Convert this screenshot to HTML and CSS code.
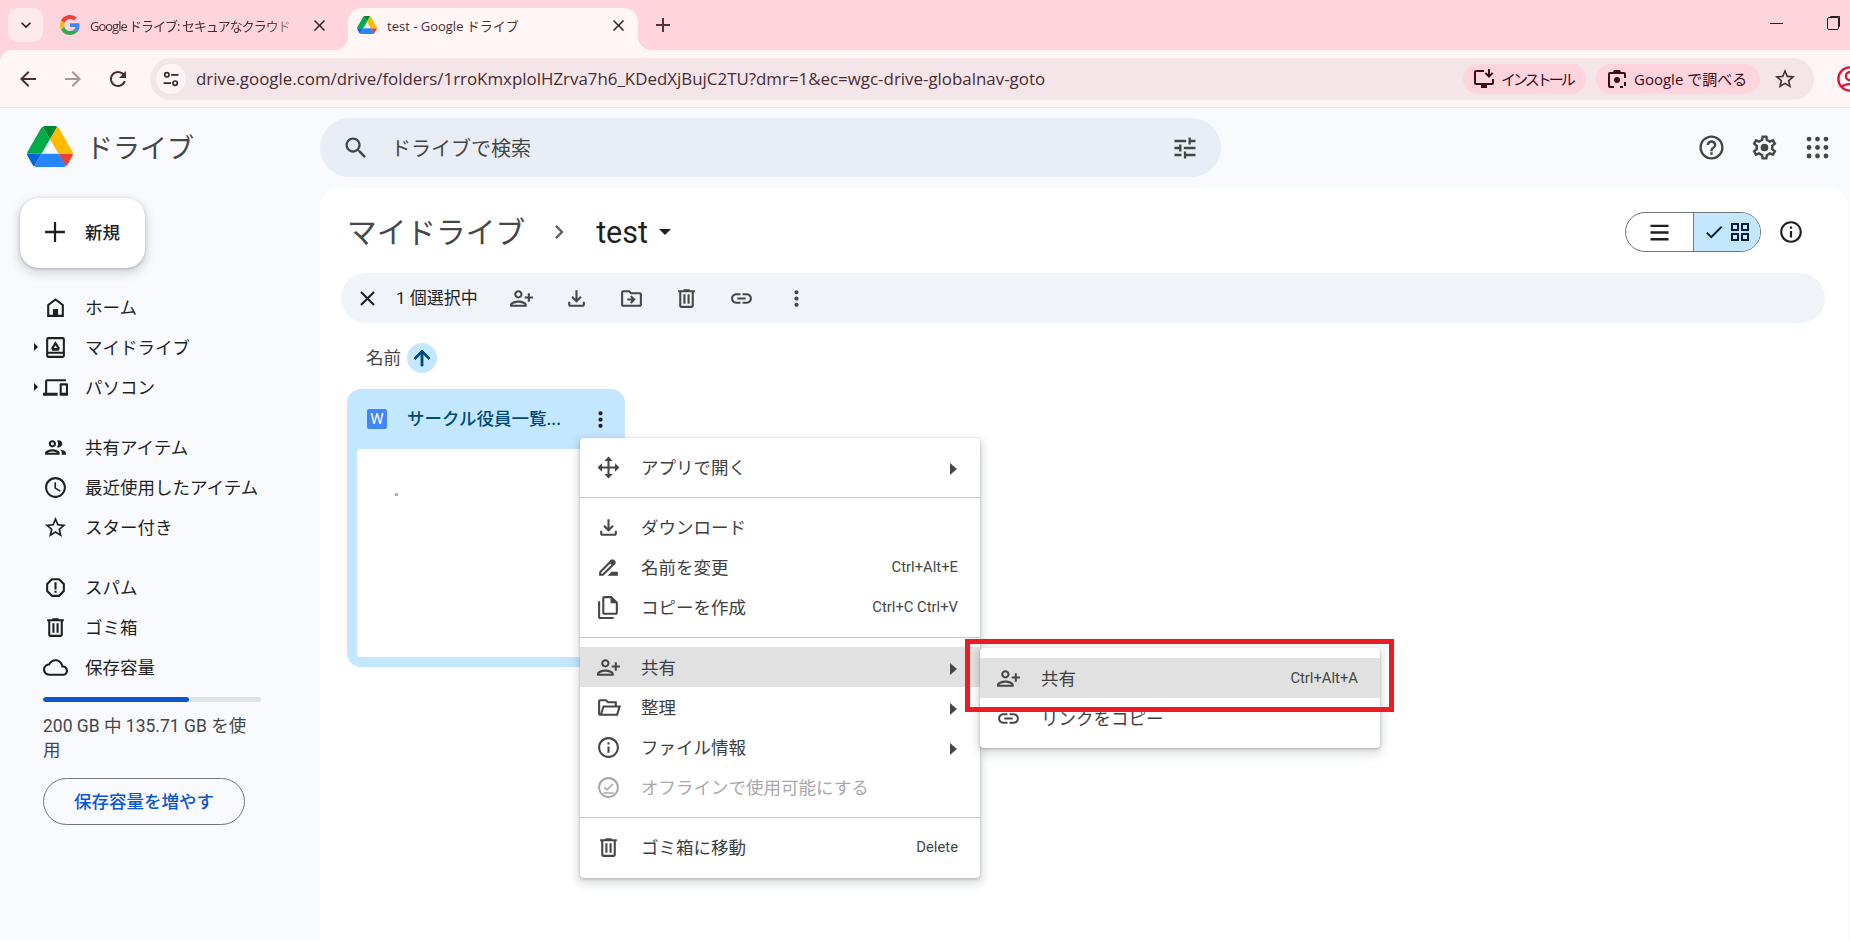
FILE: index.html
```html
<!DOCTYPE html>
<html lang="ja">
<head>
    <meta charset="UTF-8">
    <title>test - Google ドライブ</title>
    <link rel="stylesheet" href="styles.css">
</head>
<body>

    <!-- icon sprite -->
    <svg class="sprite" xmlns="http://www.w3.org/2000/svg">
        <symbol id="i-person-add" viewBox="0 0 24 24"><path transform="matrix(-1 0 0 1 24 0)" d="M15 12c2.21 0 4-1.79 4-4s-1.79-4-4-4-4 1.79-4 4 1.79 4 4 4zm0-6c1.1 0 2 .9 2 2s-.9 2-2 2-2-.9-2-2 .9-2 2-2zm0 8c-2.67 0-8 1.34-8 4v2h16v-2c0-2.66-5.33-4-8-4zm-6 4c.22-.72 3.31-2 6-2 2.7 0 5.8 1.29 6 2H9zm-3-3v-3h3v-2H6V7H4v3H1v2h3v3h2z"/></symbol>
        <symbol id="i-download" viewBox="0 0 24 24"><path d="M18 15v3H6v-3H4v3c0 1.1.9 2 2 2h12c1.1 0 2-.9 2-2v-3h-2zm-1-4-1.41-1.41L13 12.17V4h-2v8.17L8.41 9.59 7 11l5 5 5-5z"/></symbol>
        <symbol id="i-move" viewBox="0 0 24 24"><path d="M20 6h-8l-2-2H4c-1.1 0-1.99.9-1.99 2L2 18c0 1.1.9 2 2 2h16c1.1 0 2-.9 2-2V8c0-1.1-.9-2-2-2zm0 12H4V6h5.17l2 2H20v10zm-8.01-9-1.41 1.41L12.16 12H8v2h4.16l-1.59 1.59L11.99 17 16 13.01 11.99 9z"/></symbol>
        <symbol id="i-trash" viewBox="0 0 24 24"><path d="M15 4V3H9v1H4v2h1v13c0 1.1.9 2 2 2h10c1.1 0 2-.9 2-2V6h1V4h-5zm2 15H7V6h10v13zM9 8h2v9H9zm4 0h2v9h-2z"/></symbol>
        <symbol id="i-link" viewBox="0 0 24 24"><path d="M3.9 12c0-1.71 1.39-3.1 3.1-3.1h4V7H7c-2.76 0-5 2.24-5 5s2.24 5 5 5h4v-1.9H7c-1.71 0-3.1-1.39-3.1-3.1zM8 13h8v-2H8v2zm9-6h-4v1.9h4c1.71 0 3.1 1.39 3.1 3.1s-1.39 3.1-3.1 3.1h-4V17h4c2.76 0 5-2.24 5-5s-2.24-5-5-5z"/></symbol>
        <symbol id="i-more" viewBox="0 0 24 24"><path d="M12 8c1.1 0 2-.9 2-2s-.9-2-2-2-2 .9-2 2 .9 2 2 2zm0 2c-1.1 0-2 .9-2 2s.9 2 2 2 2-.9 2-2-.9-2-2-2zm0 6c-1.1 0-2 .9-2 2s.9 2 2 2 2-.9 2-2-.9-2-2-2z"/></symbol>
        <symbol id="i-close" viewBox="0 0 24 24"><path d="M19 6.41 17.59 5 12 10.59 6.41 5 5 6.41 10.59 12 5 17.59 6.41 19 12 13.41 17.59 19 19 17.59 13.41 12z"/></symbol>
        <symbol id="i-home" viewBox="0 0 24 24"><path d="M12 3 4 9v12h16V9l-8-6zm6 16H6v-9l6-4.5 6 4.5v9z"/><path d="M9.5 13.5h5V20h-5z"/></symbol>
        <symbol id="i-mydrive" viewBox="0 0 24 24"><path d="M19 2H5a2 2 0 0 0-2 2v16c0 1.1.9 2 2 2h14a2 2 0 0 0 2-2V4a2 2 0 0 0-2-2zm0 18H5v-2h14v2zm0-4H5V4h14v12z"/><path d="M12 6 7.8 12.5 9 15h6l1.2-2.5L12 6zm0 3.8 1.6 2.7h-3.2L12 9.8z"/></symbol>
        <symbol id="i-devices" viewBox="0 0 24 24"><path d="M4 6h18V4H4c-1.1 0-2 .9-2 2v11H0v3h14v-3H4V6zm19 2h-6c-.55 0-1 .45-1 1v10c0 .55.45 1 1 1h6c.55 0 1-.45 1-1V9c0-.55-.45-1-1-1zm-1 9h-4v-7h4v7z"/></symbol>
        <symbol id="i-people" viewBox="0 0 24 24"><path d="M9 13.75c-2.34 0-7 1.17-7 3.5V19h14v-1.75c0-2.33-4.66-3.5-7-3.5zM4.34 17c.84-.58 2.87-1.25 4.66-1.25s3.82.67 4.66 1.25H4.34zM9 12c1.93 0 3.5-1.57 3.5-3.5S10.93 5 9 5 5.5 6.57 5.5 8.5 7.07 12 9 12zm0-5c.83 0 1.5.67 1.5 1.5S9.83 10 9 10s-1.5-.67-1.5-1.5S8.17 7 9 7zm7.04 6.81c1.16.84 1.96 1.96 1.96 3.44V19h4v-1.75c0-2.02-3.5-3.17-5.96-3.44zM15 12c1.93 0 3.5-1.57 3.5-3.5S16.93 5 15 5c-.54 0-1.04.13-1.5.35.63.89 1 1.98 1 3.15s-.37 2.26-1 3.15c.46.22.96.35 1.5.35z"/></symbol>
        <symbol id="i-clock" viewBox="0 0 24 24"><path d="M11.99 2C6.47 2 2 6.48 2 12s4.47 10 9.99 10C17.52 22 22 17.52 22 12S17.52 2 11.99 2zM12 20c-4.42 0-8-3.58-8-8s3.58-8 8-8 8 3.58 8 8-3.58 8-8 8zm.5-13H11v6l5.25 3.15.75-1.23-4.5-2.67z"/></symbol>
        <symbol id="i-star" viewBox="0 0 24 24"><path d="M22 9.24l-7.19-.62L12 2 9.19 8.63 2 9.24l5.46 4.73L5.82 21 12 17.27 18.18 21l-1.63-7.03L22 9.24zM12 15.4l-3.76 2.27 1-4.28-3.32-2.88 4.38-.38L12 6.1l1.71 4.04 4.38.38-3.32 2.88 1 4.28L12 15.4z"/></symbol>
        <symbol id="i-spam" viewBox="0 0 24 24"><path d="M15.73 3H8.27L3 8.27v7.46L8.27 21h7.46L21 15.73V8.27L15.73 3zM19 14.9 14.9 19H9.1L5 14.9V9.1L9.1 5h5.8L19 9.1v5.8z"/><path d="M11 7h2v7h-2zm0 8h2v2h-2z"/></symbol>
        <symbol id="i-cloud" viewBox="0 0 24 24"><path d="M19.35 10.04C18.67 6.59 15.64 4 12 4 9.11 4 6.6 5.64 5.35 8.04 2.34 8.36 0 10.91 0 14c0 3.31 2.69 6 6 6h13c2.76 0 5-2.24 5-5 0-2.64-2.05-4.78-4.65-4.96zM19 18H6c-2.21 0-4-1.79-4-4 0-2.05 1.53-3.76 3.56-3.97l1.07-.11.5-.95C8.08 7.14 9.94 6 12 6c2.62 0 4.88 1.86 5.39 4.43l.3 1.5 1.53.11c1.56.1 2.78 1.41 2.78 2.96 0 1.65-1.35 3-3 3z"/></symbol>
        <symbol id="i-info" viewBox="0 0 24 24"><path d="M11 7h2v2h-2zm0 4h2v6h-2zm1-9C6.48 2 2 6.48 2 12s4.48 10 10 10 10-4.48 10-10S17.52 2 12 2zm0 18c-4.41 0-8-3.59-8-8s3.59-8 8-8 8 3.59 8 8-3.59 8-8 8z"/></symbol>
        <symbol id="i-help" viewBox="0 0 24 24"><path d="M11 18h2v-2h-2v2zm1-16C6.48 2 2 6.48 2 12s4.48 10 10 10 10-4.48 10-10S17.52 2 12 2zm0 18c-4.41 0-8-3.59-8-8s3.59-8 8-8 8 3.59 8 8-3.59 8-8 8zm0-14c-2.21 0-4 1.79-4 4h2c0-1.1.9-2 2-2s2 .9 2 2c0 2-3 1.75-3 5h2c0-2.25 3-2.5 3-5 0-2.21-1.79-4-4-4z"/></symbol>
        <symbol id="i-gear" viewBox="0 0 24 24"><path d="M19.43 12.98c.04-.32.07-.64.07-.98 0-.34-.03-.66-.07-.98l2.11-1.65c.19-.15.24-.42.12-.64l-2-3.46c-.09-.16-.26-.25-.44-.25-.06 0-.12.01-.17.03l-2.49 1c-.52-.4-1.08-.73-1.69-.98l-.38-2.65C14.46 2.18 14.25 2 14 2h-4c-.25 0-.46.18-.49.42l-.38 2.65c-.61.25-1.17.59-1.69.98l-2.49-1c-.06-.02-.12-.03-.18-.03-.17 0-.34.09-.43.25l-2 3.46c-.13.22-.07.49.12.64l2.11 1.65c-.04.32-.07.65-.07.98 0 .33.03.66.07.98l-2.11 1.65c-.19.15-.24.42-.12.64l2 3.46c.09.16.26.25.44.25.06 0 .12-.01.17-.03l2.49-1c.52.4 1.08.73 1.69.98l.38 2.65c.03.24.24.42.49.42h4c.25 0 .46-.18.49-.42l.38-2.65c.61-.25 1.17-.59 1.69-.98l2.49 1c.06.02.12.03.18.03.17 0 .34-.09.43-.25l2-3.46c.12-.22.07-.49-.12-.64l-2.11-1.65zm-1.98-1.71c.04.31.05.52.05.73 0 .21-.02.43-.05.73l-.14 1.13.89.7 1.08.84-.7 1.21-1.27-.51-1.04-.42-.9.68c-.43.32-.84.56-1.25.73l-1.06.43-.16 1.13-.2 1.35h-1.4l-.19-1.35-.16-1.13-1.06-.43c-.43-.18-.83-.41-1.23-.71l-.91-.7-1.06.43-1.27.51-.7-1.21 1.08-.84.89-.7-.14-1.13c-.03-.31-.05-.54-.05-.74s.02-.43.05-.73l.14-1.13-.89-.7-1.08-.84.7-1.21 1.27.51 1.04.42.9-.68c.43-.32.84-.56 1.25-.73l1.06-.43.16-1.13.2-1.35h1.39l.19 1.35.16 1.13 1.06.43c.43.18.83.41 1.23.71l.91.7 1.06-.43 1.27-.51.7 1.21-1.07.85-.89.7.14 1.13z"/><circle cx="12" cy="12" r="3.2"/></symbol>
        <symbol id="i-apps" viewBox="0 0 24 24"><circle cx="5" cy="5" r="2"/><circle cx="12" cy="5" r="2"/><circle cx="19" cy="5" r="2"/><circle cx="5" cy="12" r="2"/><circle cx="12" cy="12" r="2"/><circle cx="19" cy="12" r="2"/><circle cx="5" cy="19" r="2"/><circle cx="12" cy="19" r="2"/><circle cx="19" cy="19" r="2"/></symbol>
        <symbol id="i-search" viewBox="0 0 24 24"><path d="M15.5 14h-.79l-.28-.27C15.41 12.59 16 11.11 16 9.5 16 5.91 13.09 3 9.5 3S3 5.91 3 9.5 5.91 16 9.5 16c1.61 0 3.09-.59 4.23-1.57l.27.28v.79l5 4.99L20.49 19l-4.99-5zm-6 0C7.01 14 5 11.99 5 9.5S7.01 5 9.5 5 14 7.01 14 9.5 11.99 14 9.5 14z"/></symbol>
        <symbol id="i-tune" viewBox="0 0 24 24"><path d="M3 17v2h6v-2H3zM3 5v2h10V5H3zm10 16v-2h8v-2h-8v-2h-2v6h2zM7 9v2H3v2h4v2h2V9H7zm14 4v-2H11v2h10zm-6-4h2V7h4V5h-4V3h-2v6z"/></symbol>
        <symbol id="i-list" viewBox="0 0 24 24"><path d="M4 5h16v2.2H4zm0 5.9h16v2.2H4zm0 5.9h16V19H4z"/></symbol>
        <symbol id="i-grid" viewBox="0 0 24 24"><path d="M3 3h8v8H3zm2 2v4h4V5zm8-2h8v8h-8zm2 2v4h4V5zM3 13h8v8H3zm2 2v4h4v-4zm8-2h8v8h-8zm2 2v4h4v-4z"/></symbol>
        <symbol id="i-check" viewBox="0 0 24 24"><path d="M9 16.17 4.83 12l-1.42 1.41L9 19 21 7l-1.41-1.41z"/></symbol>
        <symbol id="i-rename" viewBox="0 0 24 24"><path d="M18.41 5.8 17.2 4.59c-.78-.78-2.05-.78-2.83 0l-2.68 2.68L3 15.96V20h4.04l8.74-8.74 2.63-2.63c.79-.78.79-2.05 0-2.83zM6.21 18H5v-1.21l8.66-8.66 1.21 1.21L6.21 18zM11 20l4-4h6v4H11z"/></symbol>
        <symbol id="i-copy" viewBox="0 0 24 24"><path d="M4 6H2v15c0 1.1.9 2 2 2h13v-2H4V6zm11-5H8c-1.1 0-1.99.9-1.99 2L6 17c0 1.1.89 2 1.99 2H19c1.1 0 2-.9 2-2V7l-6-6zM8 17V3h6v5h5v9H8z"/></symbol>
        <symbol id="i-folder-open" viewBox="0 0 24 24"><path d="M20 6h-8l-2-2H4c-1.1 0-2 .9-2 2v12c0 1.1.9 2 2 2h17l3-10H20V6zM4 18V6h5.17l2 2H18v2H6.5L4 18zm15.5 0H6l1.9-6h13.4l-1.8 6z"/></symbol>
        <symbol id="i-open-with" viewBox="0 0 24 24"><path d="M12 1.5 8 5.7h3V11H5.7V8L1.5 12l4.2 4v-3H11v5.3H8l4 4.2 4-4.2h-3V13h5.3v3l4.2-4-4.2-4v3H13V5.7h3z"/></symbol>
        <symbol id="i-offline" viewBox="0 0 24 24"><path d="M12 2C6.48 2 2 6.48 2 12s4.48 10 10 10 10-4.48 10-10S17.52 2 12 2zm0 18c-4.41 0-8-3.59-8-8s3.59-8 8-8 8 3.59 8 8-3.59 8-8 8z"/><path d="m10.5 13.2-2.1-2.1-1.1 1.1 3.2 3.2 6.2-6.2-1.1-1.1zM7 16.5h10V18H7z"/></symbol>
        <symbol id="i-up" viewBox="0 0 24 24"><path d="M4 12l1.41 1.41L11 7.83V20h2V7.83l5.58 5.59L20 12l-8-8-8 8z"/></symbol>
        <symbol id="i-chevron" viewBox="0 0 24 24"><path d="M10 6 8.59 7.41 13.17 12l-4.58 4.59L10 18l6-6z"/></symbol>
        <symbol id="i-back" viewBox="0 0 24 24"><path d="M20 11H7.83l5.59-5.59L12 4l-8 8 8 8 1.41-1.41L7.83 13H20v-2z"/></symbol>
        <symbol id="i-forward" viewBox="0 0 24 24"><path d="M12 4l-1.41 1.41L16.17 11H4v2h12.17l-5.58 5.59L12 20l8-8z"/></symbol>
        <symbol id="i-reload" viewBox="0 0 24 24"><path d="M17.65 6.35C16.2 4.9 14.21 4 12 4c-4.42 0-7.99 3.58-7.99 8s3.57 8 7.99 8c3.73 0 6.84-2.55 7.73-6h-2.08c-.82 2.33-3.04 4-5.65 4-3.31 0-6-2.69-6-6s2.69-6 6-6c1.66 0 3.14.69 4.22 1.78L13 11h7V4l-2.35 2.35z"/></symbol>
        <symbol id="i-plus" viewBox="0 0 24 24"><path d="M19 13h-6v6h-2v-6H5v-2h6V5h2v6h6z"/></symbol>
        <symbol id="i-plus-thin" viewBox="0 0 24 24"><path d="M19 12.8h-6.2V19h-1.6v-6.2H5v-1.6h6.2V5h1.6v6.2H19z"/></symbol>
        <symbol id="i-drive" viewBox="0 0 87.3 78">
            <path d="m6.6 66.85 3.85 6.65c.8 1.4 1.95 2.5 3.3 3.3l13.75-23.8h-27.5c0 1.55.4 3.1 1.2 4.5z" fill="#0066da"/>
            <path d="m43.65 25-13.75-23.8c-1.35.8-2.5 1.9-3.3 3.3l-25.4 44a9.06 9.06 0 0 0 -1.2 4.5h27.5z" fill="#00ac47"/>
            <path d="m73.55 76.8c1.35-.8 2.5-1.9 3.3-3.3l1.6-2.75 7.65-13.25c.8-1.4 1.2-2.95 1.2-4.5h-27.502l5.852 11.5z" fill="#ea4335"/>
            <path d="m43.65 25 13.75-23.8c-1.35-.8-2.9-1.2-4.5-1.2h-18.5c-1.6 0-3.15.45-4.5 1.2z" fill="#00832d"/>
            <path d="m59.8 53h-32.3l-13.75 23.8c1.35.8 2.9 1.2 4.5 1.2h50.8c1.6 0 3.15-.45 4.5-1.2z" fill="#2684fc"/>
            <path d="m73.4 26.5-12.7-22c-.8-1.4-1.95-2.5-3.3-3.3l-13.75 23.8 16.15 28h27.45c0-1.55-.4-3.1-1.2-4.5z" fill="#ffba00"/>
        </symbol>
        <symbol id="i-google" viewBox="0 0 48 48">
            <path fill="#EA4335" d="M24 9.5c3.54 0 6.71 1.22 9.21 3.6l6.85-6.85C35.9 2.38 30.47 0 24 0 14.62 0 6.51 5.38 2.56 13.22l7.98 6.19C12.43 13.72 17.74 9.5 24 9.5z"/>
            <path fill="#4285F4" d="M46.98 24.55c0-1.57-.15-3.09-.38-4.55H24v9.02h12.94c-.58 2.96-2.26 5.48-4.78 7.18l7.73 6c4.51-4.18 7.09-10.36 7.09-17.65z"/>
            <path fill="#FBBC05" d="M10.53 28.59c-.48-1.45-.76-2.99-.76-4.59s.27-3.14.76-4.59l-7.98-6.19C.92 16.46 0 20.12 0 24c0 3.88.92 7.54 2.56 10.78l7.97-6.19z"/>
            <path fill="#34A853" d="M24 48c6.48 0 11.93-2.13 16.02-5.81l-7.73-6c-2.15 1.45-4.92 2.3-8.29 2.3-6.26 0-11.57-4.22-13.47-9.91l-7.98 6.19C6.51 42.62 14.62 48 24 48z"/>
        </symbol>
    </svg>

    <!-- browser chrome -->
    <div class="chrome">
        <div class="tabstrip">
            <div class="tab-search"><svg class="ic-20" viewBox="0 0 24 24"><path d="M7.41 8.59 12 13.17l4.59-4.58L18 10l-6 6-6-6z"/></svg></div>
            <div class="tab">
                <svg class="favicon-g"><use href="#i-google"/></svg>
                <span class="tab-title tab-title-long">Google ドライブ: セキュアなクラウド</span>
                <svg class="tab-close"><use href="#i-close"/></svg>
            </div>
            <div class="tab tab-active">
                <svg class="favicon"><use href="#i-drive"/></svg>
                <span class="tab-title">test - Google ドライブ</span>
                <svg class="tab-close"><use href="#i-close"/></svg>
            </div>
            <svg class="tab-new"><use href="#i-plus"/></svg>
            <div class="win-btns">
                <span class="win-min"></span>
                <span class="win-restore"></span>
            </div>
        </div>
        <div class="toolbar">
            <svg class="nav-ic"><use href="#i-back"/></svg>
            <svg class="nav-ic dim"><use href="#i-forward"/></svg>
            <svg class="nav-ic"><use href="#i-reload"/></svg>
            <div class="omnibox">
                <span class="site-btn">
                    <svg class="ic-20" viewBox="0 0 24 24" fill="none" stroke="currentColor" stroke-width="2"><circle cx="7" cy="7" r="2.6" fill="none"/><path d="M12 7h9M3 17h9" fill="none"/><circle cx="17" cy="17" r="2.6" fill="none"/></svg>
                </span>
                <span class="url">drive.google.com/drive/folders/1rroKmxplolHZrva7h6_KDedXjBujC2TU?dmr=1&amp;ec=wgc-drive-globalnav-goto</span>
                <span class="chip chip-install">
                    <svg class="ic-24" viewBox="0 0 24 24"><path d="M4 3h8v2H4v11h16v-4h2v4a2 2 0 0 1-2 2h-5v3H9v-3H4a2 2 0 0 1-2-2V5a2 2 0 0 1 2-2zM16 2h2v5.2l2-2 1.4 1.4-4.4 4.4-4.4-4.4L14 5.2l2 2z"/></svg>
                    <span class="chip-narrow">インストール</span>
                </span>
                <span class="chip chip-lens">
                    <svg class="ic-24" viewBox="0 0 24 24"><path d="M9 3h6l1 2h3a2 2 0 0 1 2 2v4h-2V7H5v11a1 1 0 0 0 1 1h3v2H5a2 2 0 0 1-2-2V7a2 2 0 0 1 2-2h3zM15 19h3v2h-3zM19 15h2v4h-2z"/><circle cx="12" cy="13" r="3"/></svg>
                    Google で調べる
                </span>
                <svg class="omni-star"><use href="#i-star"/></svg>
            </div>
            <svg class="avatar" viewBox="0 0 24 24" fill="none" stroke="#e0123c" stroke-width="2"><circle cx="12" cy="12" r="10" fill="none"/><circle cx="12" cy="9.5" r="3.5" fill="none"/><path d="M5 19c2-3.5 12-3.5 14 0" fill="none"/></svg>
        </div>
    </div>

    <!-- drive header -->
    <header class="drive-head">
        <div class="brand">
            <svg class="brand-logo"><use href="#i-drive"/></svg>
            <span class="brand-name">ドライブ</span>
        </div>
        <div class="searchbar">
            <svg class="ic-28"><use href="#i-search"/></svg>
            <span class="search-text">ドライブで検索</span>
            <svg class="ic-28 tune"><use href="#i-tune"/></svg>
        </div>
        <div class="head-actions">
            <svg class="ic-29"><use href="#i-help"/></svg>
            <svg class="ic-29"><use href="#i-gear"/></svg>
            <svg class="ic-29"><use href="#i-apps"/></svg>
        </div>
    </header>

    <div class="app">
        <aside class="sidebar">
            <div class="new-btn">
                <svg class="ic-34"><use href="#i-plus-thin"/></svg>
                <span>新規</span>
            </div>

            <nav class="nav-group">
                <div class="nav-item"><svg class="nav-icon"><use href="#i-home"/></svg>ホーム</div>
                <div class="nav-item"><span class="caret"></span><svg class="nav-icon"><use href="#i-mydrive"/></svg>マイドライブ</div>
                <div class="nav-item"><span class="caret"></span><svg class="nav-icon"><use href="#i-devices"/></svg>パソコン</div>
            </nav>
            <nav class="nav-group">
                <div class="nav-item"><svg class="nav-icon"><use href="#i-people"/></svg>共有アイテム</div>
                <div class="nav-item"><svg class="nav-icon"><use href="#i-clock"/></svg>最近使用したアイテム</div>
                <div class="nav-item"><svg class="nav-icon"><use href="#i-star"/></svg>スター付き</div>
            </nav>
            <nav class="nav-group">
                <div class="nav-item"><svg class="nav-icon"><use href="#i-spam"/></svg>スパム</div>
                <div class="nav-item"><svg class="nav-icon"><use href="#i-trash"/></svg>ゴミ箱</div>
                <div class="nav-item"><svg class="nav-icon"><use href="#i-cloud"/></svg>保存容量</div>
            </nav>

            <div class="storage">
                <div class="storage-bar"><div class="storage-fill" style="width: 67%"></div></div>
                <p class="storage-text">200 GB 中 135.71 GB を使<br>用</p>
                <div class="storage-btn">保存容量を増やす</div>
            </div>
        </aside>

        <main class="panel">
            <div class="title-row">
                <span class="crumb">マイドライブ</span>
                <svg class="crumb-sep"><use href="#i-chevron"/></svg>
                <span class="crumb-current">test</span>
                <span class="crumb-arrow"></span>
                <div class="view-toggle">
                    <span class="view-list"><svg class="ic-27"><use href="#i-list"/></svg></span>
                    <span class="view-grid">
                        <svg class="ic-22"><use href="#i-check"/></svg>
                        <svg class="ic-24"><use href="#i-grid"/></svg>
                    </span>
                </div>
                <svg class="ic-26 view-info"><use href="#i-info"/></svg>
            </div>

            <div class="actionbar">
                <span class="act-close"><svg class="ic-25"><use href="#i-close"/></svg></span>
                <span class="act-count">1 個選択中</span>
                <span class="act"><svg class="ic-25"><use href="#i-person-add"/></svg></span>
                <span class="act"><svg class="ic-25"><use href="#i-download"/></svg></span>
                <span class="act"><svg class="ic-25"><use href="#i-move"/></svg></span>
                <span class="act"><svg class="ic-25"><use href="#i-trash"/></svg></span>
                <span class="act"><svg class="ic-25"><use href="#i-link"/></svg></span>
                <span class="act"><svg class="ic-25"><use href="#i-more"/></svg></span>
            </div>

            <div class="sort-row">
                <span>名前</span>
                <span class="sort-btn"><svg class="ic-24"><use href="#i-up"/></svg></span>
            </div>

            <div class="file-card">
                <div class="file-head">
                    <span class="word-ic">W</span>
                    <span class="file-name">サークル役員一覧...</span>
                    <svg class="ic-25 file-more"><use href="#i-more"/></svg>
                </div>
                <div class="file-preview"><span class="speck"></span></div>
            </div>
        </main>
    </div>

    <!-- context menu -->
    <div class="menu menu-main">
        <div class="menu-row"><svg class="menu-ic"><use href="#i-open-with"/></svg>アプリで開く<span class="sub-arrow"></span></div>
        <div class="menu-sep"></div>
        <div class="menu-row"><svg class="menu-ic"><use href="#i-download"/></svg>ダウンロード</div>
        <div class="menu-row"><svg class="menu-ic"><use href="#i-rename"/></svg>名前を変更<span class="shortcut">Ctrl+Alt+E</span></div>
        <div class="menu-row"><svg class="menu-ic"><use href="#i-copy"/></svg>コピーを作成<span class="shortcut">Ctrl+C Ctrl+V</span></div>
        <div class="menu-sep"></div>
        <div class="menu-row hot"><svg class="menu-ic"><use href="#i-person-add"/></svg>共有<span class="sub-arrow"></span></div>
        <div class="menu-row"><svg class="menu-ic"><use href="#i-folder-open"/></svg>整理<span class="sub-arrow"></span></div>
        <div class="menu-row"><svg class="menu-ic"><use href="#i-info"/></svg>ファイル情報<span class="sub-arrow"></span></div>
        <div class="menu-row off"><svg class="menu-ic"><use href="#i-offline"/></svg>オフラインで使用可能にする</div>
        <div class="menu-sep"></div>
        <div class="menu-row"><svg class="menu-ic"><use href="#i-trash"/></svg>ゴミ箱に移動<span class="shortcut">Delete</span></div>
    </div>

    <div class="menu menu-share">
        <div class="menu-row hot"><svg class="menu-ic"><use href="#i-person-add"/></svg>共有<span class="shortcut">Ctrl+Alt+A</span></div>
        <div class="menu-row"><svg class="menu-ic"><use href="#i-link"/></svg>リンクをコピー</div>
    </div>

    <div class="red-box"></div>

</body>
</html>
```

FILE: styles.css
```css
* {
    box-sizing: border-box;
}

body {
    margin: 0;
    width: 1850px;
    height: 940px;
    position: relative;
    overflow: hidden;
    background-color: #f8fafd;
    color: #1f1f1f;
    font-family: Roboto, 'Noto Sans CJK JP', sans-serif;
    font-size: 17.5px;
}

svg {
    flex: none;
    fill: currentColor;
}

.sprite { display: none; }

.ic-20 { width: 20px; height: 20px; }
.ic-22 { width: 22px; height: 22px; }
.ic-24 { width: 24px; height: 24px; }
.ic-25 { width: 25px; height: 25px; }
.ic-26 { width: 26px; height: 26px; }
.ic-27 { width: 27px; height: 27px; }
.ic-28 { width: 28px; height: 28px; }
.ic-29 { width: 29px; height: 29px; }
.ic-34 { width: 34px; height: 34px; }

/* browser chrome */
.chrome {
    background-color: #fed5dd;
    font-family: 'Open Sans', 'Noto Sans CJK JP', sans-serif;
    color: #4a2c33;
}

.tabstrip {
    height: 50px;
    padding: 8px 0 0 8px;
    display: flex;
    align-items: flex-start;
}

.tab-search {
    width: 35px;
    height: 34px;
    border-radius: 10px;
    background-color: #feeaec;
    display: flex;
    align-items: center;
    justify-content: center;
    color: #2b1a1e;
}

.tab {
    width: 305px;
    height: 42px;
    padding: 0 19px 8px 17px;
    display: flex;
    align-items: center;
    font-size: 13px;
    position: relative;
}

.tab-active {
    width: 290px;
    padding: 0 10px 8px 9px;
    background-color: #fff6f5;
    border-radius: 14px 14px 0 0;
}

.tab-active::before,
.tab-active::after {
    content: "";
    position: absolute;
    bottom: 0;
    width: 14px;
    height: 14px;
}

.tab-active::before {
    left: -14px;
    background: radial-gradient(circle at 0 0, #fed5dd 14px, #fff6f5 14.5px);
}

.tab-active::after {
    right: -14px;
    background: radial-gradient(circle at 100% 0, #fed5dd 14px, #fff6f5 14.5px);
}

.favicon-g { width: 20px; height: 20px; }
.favicon { width: 20px; height: 18px; }

.tab-title {
    flex: 1;
    margin-left: 10px;
    white-space: nowrap;
}

.tab-title-long {
    letter-spacing: -1px;
    margin-right: 12px;
    -webkit-mask-image: linear-gradient(90deg, #000 85%, rgba(0, 0, 0, .25) 100%);
    mask-image: linear-gradient(90deg, #000 85%, rgba(0, 0, 0, .25) 100%);
}

.tab-close {
    width: 19px;
    height: 19px;
    color: #3b2328;
}

.tab-new {
    width: 24px;
    height: 24px;
    margin: 5px 0 0 13px;
    color: #5a2f38;
}

.win-btns {
    margin-left: auto;
    padding: 9px 11px 0 0;
    display: flex;
    align-items: center;
    gap: 44px;
}

.win-min {
    width: 13px;
    height: 1px;
    background-color: #222;
}

.win-restore {
    width: 12px;
    height: 13px;
    border: 1px solid #222;
    border-radius: 2px;
    box-shadow: 2px -2px 0 -1px #222;
}

.toolbar {
    height: 58px;
    padding: 0 0 0 16px;
    background-color: #fff6f5;
    border-radius: 12px 0 0 0;
    border-bottom: 1px solid #f9dde2;
    display: flex;
    align-items: center;
    overflow: hidden;
}

.nav-ic {
    width: 24px;
    height: 24px;
    margin-right: 21px;
}

.nav-ic.dim { color: #a9959a; }

.omnibox {
    flex: none;
    width: 1664px;
    height: 42px;
    margin-left: -1px;
    padding: 0 0 0 6px;
    border-radius: 21px;
    background-color: #f3e5e8;
    display: flex;
    align-items: center;
}

.site-btn {
    width: 30px;
    height: 30px;
    border-radius: 50%;
    background-color: #fff6f5;
    display: flex;
    align-items: center;
    justify-content: center;
    color: #3b2328;
}

.url {
    margin-left: 10px;
    flex: 1;
    font-size: 16.9px;
    white-space: nowrap;
}

.chip {
    height: 30px;
    padding: 0 12px 0 9px;
    border-radius: 15px;
    background-color: #fed5dd;
    display: flex;
    align-items: center;
    gap: 5px;
    font-size: 15px;
    color: #3d0a1b;
    white-space: nowrap;
}

.chip-narrow { letter-spacing: -3px; }

.chip-install { width: 123px; }
.chip-lens { width: 164px; margin-left: 10px; }

.omni-star {
    width: 24px;
    height: 24px;
    margin: 0 17px 0 13px;
}

.avatar {
    width: 28px;
    height: 28px;
    margin-left: 22px;
}

/* drive header */
.drive-head {
    height: 80px;
    padding-bottom: 1px;
    display: flex;
    align-items: center;
}

.brand {
    width: 320px;
    padding: 0 0 3px 27px;
    display: flex;
    align-items: center;
    color: #444746;
}

.brand-logo {
    width: 46px;
    height: 41px;
}

.brand-name {
    margin-left: 13px;
    font-size: 27px;
}

.searchbar {
    width: 901px;
    height: 59px;
    padding: 0 22px;
    border-radius: 30px;
    background-color: #e9eef6;
    display: flex;
    align-items: center;
    color: #444746;
}

.search-text {
    margin-left: 21px;
    font-size: 20px;
}

.tune { margin-left: auto; }

.head-actions {
    margin-left: auto;
    padding-right: 18px;
    display: flex;
    gap: 24px;
    color: #444746;
}

/* body */
.app {
    display: flex;
    height: 752px;
}

.sidebar {
    width: 320px;
    padding-top: 10px;
}

.new-btn {
    width: 125px;
    height: 70px;
    margin-left: 20px;
    margin-bottom: 19px;
    padding: 0 0 2px 18px;
    border-radius: 19px;
    background-color: #fff;
    box-shadow: 0 1px 3px rgba(60, 64, 67, .3), 0 4px 8px 3px rgba(60, 64, 67, .15);
    display: flex;
    align-items: center;
    gap: 13px;
    font-weight: 500;
}

.new-btn span {
    margin-top: -2px;
}

.nav-group {
    margin-bottom: 20px;
}

.nav-group:nth-of-type(3) {
    margin-bottom: 10px;
}

.nav-item {
    height: 40px;
    padding: 0 0 2px 43px;
    display: flex;
    align-items: center;
    color: #1f1f1f;
}

.caret {
    width: 11px;
    margin: 2px 0 0 -11px;
    padding-left: 2px;
}

.caret::before {
    content: "";
    display: block;
    width: 0;
    height: 0;
    border-left: 4px solid #1f1f1f;
    border-top: 4px solid transparent;
    border-bottom: 4px solid transparent;
}

.nav-icon {
    width: 25px;
    height: 25px;
    margin: 2px 17px 0 0;
    color: #1f1f1f;
}

.storage {
    padding-left: 43px;
}

.storage-bar {
    width: 218px;
    height: 5px;
    border-radius: 3px;
    background-color: #e3e3e3;
    overflow: hidden;
}

.storage-fill {
    height: 100%;
    background-color: #0b57d0;
    border-radius: 3px;
}

.storage-text {
    margin: 12px 0 16px;
    line-height: 24px;
    white-space: nowrap;
    color: #444746;
}

.storage-btn {
    width: 202px;
    height: 47px;
    padding-bottom: 3px;
    border: 1px solid #747775;
    border-radius: 24px;
    display: flex;
    align-items: center;
    justify-content: center;
    color: #0b57d0;
    font-weight: 500;
}

/* main panel */
.panel {
    flex: 1;
    background-color: #fff;
    border-radius: 18px 18px 0 0;
    margin-right: 2px;
}

.title-row {
    height: 85px;
    padding: 3px 24px 0 27px;
    display: flex;
    align-items: center;
}

.crumb {
    margin-top: -3px;
    font-size: 29.7px;
    color: #444746;
}

.crumb-sep {
    width: 28px;
    height: 28px;
    margin: 0 23px 0 20px;
    color: #5f6368;
}

.crumb-current {
    font-size: 30.5px;
}

.crumb-arrow {
    margin-left: 11px;
    width: 0;
    height: 0;
    border-left: 6px solid transparent;
    border-right: 6px solid transparent;
    border-top: 6px solid #1f1f1f;
}

.view-toggle {
    margin-left: auto;
    width: 136px;
    height: 40px;
    border: 1px solid #747775;
    border-radius: 20px;
    display: flex;
    overflow: hidden;
}

.view-list {
    width: 68px;
    display: flex;
    align-items: center;
    justify-content: center;
    border-right: 1px solid #747775;
}

.view-grid {
    flex: 1;
    padding-left: 1px;
    background-color: #c2e7ff;
    color: #001d35;
    display: flex;
    align-items: center;
    justify-content: center;
    gap: 3px;
}

.view-info {
    margin-left: 17px;
    margin-right: 20px;
}

.actionbar {
    height: 50px;
    margin: 0 23px 0 21px;
    padding-left: 6px;
    border-radius: 25px;
    background-color: #f0f4f9;
    display: flex;
    align-items: center;
    color: #444746;
}

.act-close {
    width: 40px;
    display: flex;
    justify-content: center;
    color: #1f1f1f;
}

.act-count {
    width: 81px;
    margin: -3px 17px 0 9px;
    font-size: 17px;
    white-space: nowrap;
    color: #1f1f1f;
}

.act {
    width: 55px;
    display: flex;
    justify-content: center;
}

.sort-row {
    height: 66px;
    padding: 20px 0 0 46px;
    display: flex;
    align-items: flex-start;
    gap: 6px;
    color: #444746;
}

.sort-row > span:first-child {
    line-height: 30px;
}

.sort-btn {
    width: 30px;
    height: 30px;
    border-radius: 50%;
    background-color: #c2e7ff;
    color: #004a77;
    display: flex;
    align-items: center;
    justify-content: center;
}

.sort-btn svg {
    stroke: currentColor;
    stroke-width: .8;
}

.file-card {
    width: 278px;
    height: 278px;
    margin-left: 27px;
    border-radius: 14px;
    background-color: #c2e7ff;
}

.file-head {
    height: 60px;
    padding-left: 20px;
    display: flex;
    align-items: center;
    color: #004a77;
}

.word-ic {
    width: 20px;
    height: 20px;
    border-radius: 2px;
    background-color: #4285f4;
    color: #fff;
    font-size: 15px;
    line-height: 20px;
    text-align: center;
}

.file-name {
    margin: -3px 0 0 20px;
    width: 181px;
    font-weight: 500;
    white-space: nowrap;
}

.file-more {
    color: #1f1f1f;
}

.file-preview {
    height: 208px;
    margin: 0 10px;
    border-radius: 4px;
    background-color: #fff;
    position: relative;
}

.speck {
    position: absolute;
    left: 38px;
    top: 44px;
    width: 3px;
    height: 3px;
    background-color: #b0b0b0;
}

/* menus */
.menu {
    position: absolute;
    width: 400px;
    padding: 9px 0;
    border-radius: 4px;
    background-color: #fff;
    box-shadow: 0 1px 3px rgba(60, 64, 67, .35), 0 4px 8px 3px rgba(60, 64, 67, .15);
    color: #3c4043;
}

.menu-main {
    left: 580px;
    top: 438px;
    height: 440px;
}

.menu-main .hot {
    margin-top: 1px;
}

.menu-share {
    left: 980px;
    top: 648px;
    height: 100px;
    padding: 10px 0;
}

.menu-row {
    height: 40px;
    padding: 0 22px 2px 16px;
    display: flex;
    align-items: center;
    white-space: nowrap;
}

.menu-row.hot { background-color: #e1e1e1; }
.menu-row.off { color: #a8a8a8; }

.menu-ic {
    width: 25px;
    height: 25px;
    margin: 2px 20px 0 0;
    color: #444746;
}

.off .menu-ic { color: #a8a8a8; }

.menu-sep {
    height: 1px;
    margin: 10px 0 9px;
    background-color: #c7c7c7;
}

.shortcut {
    margin: 2px 0 0 auto;
    font-size: 14.8px;
    color: #444746;
}

.sub-arrow {
    margin: 5px 1px 0 auto;
    width: 0;
    height: 0;
    border-left: 7px solid #444746;
    border-top: 6px solid transparent;
    border-bottom: 6px solid transparent;
}

.red-box {
    position: absolute;
    left: 965px;
    top: 639px;
    width: 429px;
    height: 73px;
    border: 5px solid #ed1c24;
}
```
